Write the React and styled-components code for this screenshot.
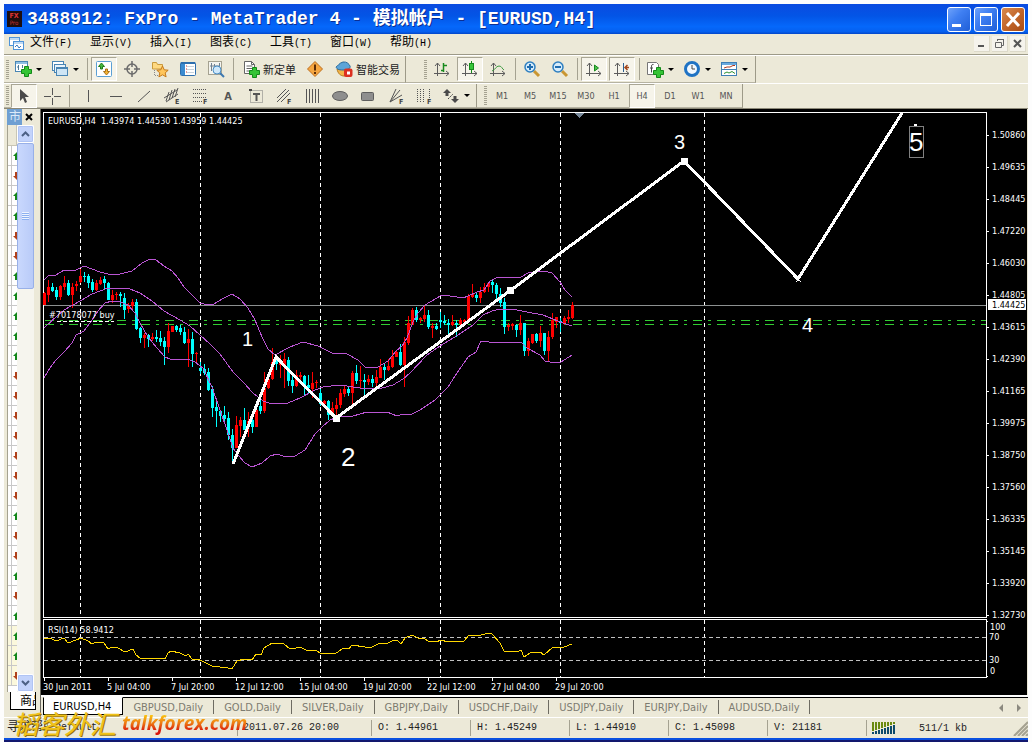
import styled, { createGlobalStyle, css } from "styled-components";

const UI_FONT = `"DejaVu Sans Condensed", "DejaVu Sans", "Noto Sans CJK SC", sans-serif`;
const SONG_FONT = `"Liberation Mono", "Noto Sans CJK SC", monospace`;

const GlobalStyle = createGlobalStyle`
  * {
    box-sizing: border-box;
  }

  body {
    margin: 0;
    background: #fdfdfd;
  }

  button {
    margin: 0;
    padding: 0;
    border: none;
    background: none;
    color: inherit;
    font: inherit;
  }

  ul {
    margin: 0;
    padding: 0;
    list-style: none;
  }
`;

const Page = styled.div`
  padding: 4px 4px 0;
  overflow: hidden;
`;

const Window = styled.div`
  position: relative;
  display: flex;
  flex-direction: column;
  background: #ece9d8;
  font-family: ${UI_FONT};
`;

/* ---------- title bar ---------- */

const TitleBar = styled.header`
  display: flex;
  align-items: center;
  height: 30px;
  padding: 0 3px;
  background: linear-gradient(#0a4be0, #0355e6 40%, #0568fb 75%, #0560f0 92%, #0346c8);
`;

const Title = styled.h1`
  flex: 1;
  margin: 0 0 0 5px;
  color: #fff;
  font-family: ${SONG_FONT};
  font-size: 18px;
  font-weight: bold;
  line-height: 24px;
  white-space: pre;
  text-shadow: 1px 1px 0 #0a2f94;
`;

const CaptionButtons = styled.div`
  display: flex;
  gap: 3px;
`;

const CaptionButton = styled.button`
  width: 24px;
  height: 25px;
  border: 1px solid #fff;
  border-radius: 3px;
  background: ${(p) =>
    p.$close
      ? "linear-gradient(135deg, #d98a4e, #c2662a 50%, #a84c14)"
      : "linear-gradient(135deg, #6ea2fb, #3f7ff2 40%, #1f5fd8)"};

  svg {
    display: block;
  }
`;

/* ---------- menu ---------- */

const MenuBar = styled.nav`
  display: flex;
  align-items: center;
  height: 21px;
  padding: 0 2px 1px 5px;
  border-bottom: 1px solid #9d9a88;
`;

const MenuItem = styled.button`
  width: 60px;
  color: #000;
  font-family: ${SONG_FONT};
  font-size: 12px;
  line-height: 18px;
  text-align: left;
  white-space: nowrap;

  &:first-of-type {
    margin-left: 6px;
  }
`;

const HotKey = styled.span`
  font-size: 10px;
`;

const Spacer = styled.div`
  flex: 1;
`;

const ChildButton = styled.button`
  width: 16px;
  height: 16px;
  margin-left: 2px;
  background: #f5f3ec;
  border-right: 1px solid #dcd9c9;
  border-bottom: 1px solid #dcd9c9;

  svg {
    display: block;
  }
`;

/* ---------- toolbars ---------- */

const ToolRow = styled.div`
  display: flex;
  height: ${(p) => p.$height}px;
  border-top: 1px solid #fff;
`;

const ToolBar = styled.div`
  display: flex;
  align-items: center;
  padding-right: 2px;
  border-right: 1px solid #9d9a88;
  border-bottom: 1px solid #b6b3a2;
`;

const Grip = styled.div`
  width: 3px;
  height: 19px;
  margin: 0 1px 0 ${(p) => p.$left || 2}px;
  background: repeating-linear-gradient(#a5a291 0 1px, #ece9d8 1px 2px);
`;

const Divider = styled.div`
  width: 1px;
  height: 22px;
  margin: 0 ${(p) => p.$right || 2}px 0 3px;
  background: #a5a291;
`;

const Tool = styled.button`
  display: flex;
  align-items: center;
  justify-content: center;
  width: ${(p) => p.$width || 28}px;
  height: 24px;
  flex: none;
  color: #555;
  font-size: 9px;

  ${(p) =>
    p.$pressed &&
    css`
      width: 26px;
      margin: 0 1px;
      background: #f6f4ea;
      border: 1px solid #a9a695;
      border-right-color: #fff;
      border-bottom-color: #fff;
    `}
`;

const TextTool = styled(Tool)`
  justify-content: flex-start;
  gap: 3px;
  padding-left: 6px;
  color: #222;
  font-family: "Noto Sans CJK SC", sans-serif;
  font-size: 11px;
  white-space: nowrap;
`;

const DropTool = styled(Tool)`
  justify-content: flex-start;
  gap: 4px;
  padding-left: 4px;

  &::after {
    content: "";
    border: 3px solid transparent;
    border-top-color: #000;
    border-bottom-width: 0;
  }
`;

/* ---------- work area ---------- */

const Main = styled.main`
  display: flex;
  border-top: 1px solid #8c8978;
`;

const MarketWatch = styled.aside`
  display: flex;
  flex-direction: column;
  flex: none;
  width: 36px;
  padding: 0 6px 0 3px;
`;

const WatchTitle = styled.div`
  display: flex;
  align-items: center;
  justify-content: space-between;
  height: 16px;
  color: #dce9f8;
  font-size: 12px;
  line-height: 16px;

  span {
    width: 15px;
    overflow: hidden;
    padding-left: 2px;
    background: #6f9fd2;
  }

  button {
    width: 9px;
    color: #000;
  }

  svg {
    display: block;
  }
`;

const WatchBody = styled.div`
  display: flex;
  flex: 1;
`;

const WatchList = styled.ul`
  flex: 1;
  overflow: hidden;
  border-left: 1px solid #a5a291;
  background: #fff;
`;

const WatchHead = styled.div`
  height: 21px;
  border-bottom: 1px solid #c9c6b5;
  border-right: 1px solid #c9c6b5;
  background: #ece9d8;
`;

const WatchRow = styled.li`
  display: flex;
  justify-content: flex-end;
  align-items: center;
  height: 20px;
  border-bottom: 1px solid #c8c8c8;
  background: linear-gradient(90deg, transparent 3px, #c8c8c8 3px 4px, transparent 4px)
    ${(p) => (p.$tint ? "#fbf8dc" : "#fff")};
`;

const ScrollBar = styled.div`
  display: flex;
  flex-direction: column;
  flex: none;
  width: 17px;
  background: #f6f5ee;
`;

const ScrollButton = styled.button`
  height: 18px;
  border: 1px solid #fff;
  border-radius: 2px;
  background: #c3d3fb;
  box-shadow: inset 0 0 0 1px #b0c4f4;

  svg {
    display: block;
    margin: auto;
  }
`;

const ScrollThumb = styled.div`
  display: flex;
  align-items: center;
  justify-content: center;
  height: 146px;
  border: 1px solid #98b0e8;
  border-radius: 2px;
  background: linear-gradient(90deg, #c9d8fd, #b9cbf8);

  &::before {
    content: "";
    width: 7px;
    height: 8px;
    background: repeating-linear-gradient(#eef4fe 0 1px, #8cb0f0 1px 2px);
  }
`;

const WatchTab = styled.button`
  width: 26px;
  height: 18px;
  margin: 0 0 7px 3px;
  overflow: hidden;
  border: 1px solid #000;
  border-top: none;
  background: #fff;
  padding-left: 9px;
  color: #000;
  font-size: 12px;
  line-height: 16px;
  text-align: left;
  white-space: nowrap;
`;

const ChartColumn = styled.section`
  flex: 1;
  min-width: 0;
  border-left: 1px solid #6b6960;
`;

const ChartSvg = styled.svg`
  display: block;
  width: 100%;
  height: auto;
  border-right: 1px solid #ece9d8;
  background: #000;
  font-family: ${UI_FONT};
  font-size: 9px;
`;

const TabBar = styled.div`
  display: flex;
  height: 22px;
  border-top: 2px solid #fff;
  padding-left: 2px;
`;

const TabList = styled.div`
  display: flex;
  flex: 1;
  border-top: 1px solid #000;
`;

const Tab = styled.button`
  align-self: flex-start;
  height: 17px;
  padding: 0 10px;
  color: #7d7b70;
  font-size: 11px;
  line-height: 17px;
  white-space: nowrap;

  & + & {
    border-right: 1px solid #6e6c62;
    height: 14px;
    margin-top: 2px;
    line-height: 13px;
  }

  ${(p) =>
    p.$active &&
    css`
      height: 18px;
      padding: 0 11px 0 9px;
      margin-top: -1px;
      border: 1px solid #000;
      border-top-color: #fff;
      background: #fff;
      color: #000;
    `}
`;

const TabArrows = styled.div`
  display: flex;
  gap: 7px;
  padding-right: 4px;

  svg {
    display: block;
  }
`;

/* ---------- status bar ---------- */

const StatusBar = styled.footer`
  display: flex;
  align-items: center;
  height: 21px;
  border-top: 1px solid #fff;
  color: #222;
  font-family: ${SONG_FONT};
  font-size: 10px;
`;

const StatusCell = styled.div`
  flex: none;
  width: ${(p) => p.$width}px;
  height: 16px;
  overflow: hidden;
  padding-left: ${(p) => p.$pad || 6}px;
  border-right: 1px solid #a5a291;
  line-height: 16px;
  white-space: pre;
`;

const HelpCell = styled(StatusCell)`
  font-size: 12px;
`;

const Connection = styled.div`
  display: flex;
  align-items: center;
  flex: 1;
  gap: 23px;
  padding-left: 5px;
  white-space: pre;
`;

const TaskBar = styled.div`
  height: 4px;
  border-top: 2px solid #0a50e0;
  background: #12186e;
`;

const Watermark = styled.div`
  position: absolute;
  left: 8px;
  bottom: 2px;
  display: flex;
  align-items: center;
  gap: 6px;
  font-style: italic;
  font-weight: bold;
  line-height: 26px;
  pointer-events: none;
`;

const WatermarkName = styled.span`
  color: #f0c21a;
  font-family: "Noto Sans CJK SC", sans-serif;
  font-size: 26px;
  font-weight: normal;
  text-shadow: 1px 1px 0 #9a7608;
`;

const WatermarkSite = styled.span`
  background: linear-gradient(#f9c412 20%, #ee7a12 50%, #d8180c 80%);
  background-clip: text;
  color: transparent;
  font-family: "Open Sans", sans-serif;
  font-size: 19px;
`;

/* ---------- icons ---------- */

const Icon = ({ children, w = 18, h = 18 }) => (
  <svg width={w} height={h} viewBox={`0 0 ${w} ${h}`} fill="none" aria-hidden="true">
    {children}
  </svg>
);

const Plus = ({ x, y }) => (
  <path d={`M${x + 3} ${y}h4v3h3v4h-3v3h-4v-3h-3v-4h3z`} fill="#35c435" stroke="#128a18" />
);

const Axes = () => (
  <path d="M4.5 16V3M2 6l2.500-3L7 6M1 13.500h15M13 11l3 2.500-3 2.500" stroke="#5c5c5c" />
);

const NewChartIcon = () => (
  <Icon>
    <rect x="1.500" y="1.500" width="12" height="10" fill="#fff" stroke="#4a86b4" />
    <path d="M2 3h11" stroke="#8fc0e4" strokeWidth="2" />
    <path d="M4.500 5v5M3 7h2M8.500 5v3" stroke="#4c7a99" />
    <Plus x={7.5} y={6.5} />
  </Icon>
);

const WindowsIcon = () => (
  <Icon>
    <rect x="1.500" y="1.500" width="11" height="9" fill="#fff" stroke="#4a86b4" />
    <rect x="3.500" y="4.500" width="11" height="8" fill="#eaf4fb" stroke="#4a86b4" />
    <rect x="5.500" y="7.500" width="11" height="8" fill="#cfe6f5" stroke="#4a86b4" />
    <path d="M6 8.500h10" stroke="#4a86b4" />
  </Icon>
);

const MarketIcon = () => (
  <Icon>
    <rect x="1.500" y="1.500" width="15" height="15" rx="1" fill="#fff" stroke="#5b9fd4" />
    <path d="M6.500 3l3 3.500h-2V9h-2V6.500h-2z" fill="#46b83c" stroke="#1f7d1a" />
    <path d="M11.500 15l3-3.500h-2V9h-2v2.500h-2z" fill="#f3b330" stroke="#a9711a" />
  </Icon>
);

const TargetIcon = () => (
  <Icon>
    <circle cx="9" cy="9" r="5" stroke="#6b6b6b" strokeWidth="1.500" />
    <path d="M9 1v6M9 11v6M1 9h6M11 9h6" stroke="#6b6b6b" strokeWidth="1.500" />
  </Icon>
);

const FolderStarIcon = () => (
  <Icon>
    <path d="M1.500 9V2.500h4l1 2h5V9z" fill="#ffd980" stroke="#c99a3c" />
    <path d="M3.500 10v6M4 15.500h4" stroke="#8a8a8a" strokeDasharray="1 1" />
    <path
      d="M11.500 6l1.700 3.800 4 .4-3 2.700.9 4-3.600-2.100-3.600 2.100.9-4-3-2.700 4-.4z"
      fill="#ffc65c"
      stroke="#c47a1c"
    />
  </Icon>
);

const TerminalIcon = () => (
  <Icon>
    <rect x="1.500" y="2.500" width="15" height="13" rx="1" fill="#fff" stroke="#2e6fae" />
    <rect x="2" y="3" width="4" height="12" fill="#3b8bd0" />
    <path d="M2 3h14" stroke="#2e6fae" strokeWidth="2" />
    <path d="M8 6.500h7M8 9.500h7M8 12.500h7" stroke="#c6d2dc" />
    <path d="M7 6h1M7 9h1M7 12h1" stroke="#c33" />
  </Icon>
);

const TesterIcon = () => (
  <Icon>
    <rect x="1.500" y="1.500" width="13" height="13" fill="#f4f4ee" stroke="#a5a291" />
    <path d="M4.500 3v8M7.500 4v4M12.500 3v4M3 6h10" stroke="#708090" />
    <circle cx="10" cy="10" r="4" fill="#cfe8fa" stroke="#4a8fc6" />
    <path d="M13 13l4 4" stroke="#3d78b0" strokeWidth="2" />
  </Icon>
);

const NewOrderIcon = () => (
  <Icon>
    <path d="M2.500 1.500h7l3 3v9h-10z" fill="#fff" stroke="#666" />
    <path d="M9.500 1.500v3h3M4.500 6h6M4.500 8.500h6M4.500 11h4" stroke="#666" />
    <Plus x={7.5} y={7.5} />
  </Icon>
);

const WarningIcon = () => (
  <Icon>
    <path d="M9 1.500L16.500 9 9 16.500 1.500 9z" fill="#f5a640" stroke="#bd6f1e" />
    <path d="M9 4.500v6M9 12v2" stroke="#5b2c06" strokeWidth="2" />
  </Icon>
);

const RobotIcon = () => (
  <Icon>
    <path d="M2 9c1 5 4 7 7 7s6-3 6-7z" fill="#f3b548" stroke="#b57a1e" />
    <path d="M1 7c2-1 3-4 7-5 4-.5 6 2 7 4 1 2-2 4-7 4S2 9 1 7z" fill="#5ba4d8" stroke="#2c6c9e" />
    <rect x="9" y="8.500" width="8.500" height="8.500" rx="2" fill="#dc3020" />
    <rect x="12" y="11.500" width="3" height="3" fill="#fff" />
  </Icon>
);

const BarsIcon = () => (
  <Icon>
    <Axes />
    <path d="M10.500 3v9M8 10.500h2M11 5.500h3" stroke="#178a1c" strokeWidth="1.500" />
  </Icon>
);

const CandleIcon = () => (
  <Icon>
    <Axes />
    <path d="M10.500 1v12" stroke="#178a1c" />
    <rect x="8.500" y="3.500" width="4" height="6" fill="#37c63a" stroke="#178a1c" />
  </Icon>
);

const LineIcon = () => (
  <Icon>
    <Axes />
    <path d="M3 11c3-1 4-5 7-5s3 3 5 4" stroke="#3b9a3e" />
  </Icon>
);

const ZoomIcon = ({ plus }) => (
  <Icon>
    <path d="M11 11l5 5" stroke="#c99632" strokeWidth="3" />
    <circle cx="7" cy="7" r="5" fill="#d6ecfb" stroke="#2e7fc0" strokeWidth="1.500" />
    <path d={plus ? "M4 7h6M7 4v6" : "M4 7h6"} stroke="#1f6db0" strokeWidth="2" />
  </Icon>
);

const AutoScrollIcon = () => (
  <Icon>
    <Axes />
    <path d="M9.500 5v6l4-3z" fill="#4cc04c" stroke="#178a1c" />
  </Icon>
);

const ShiftIcon = () => (
  <Icon>
    <Axes />
    <path d="M10.500 3v9" stroke="#2c5f91" />
    <path d="M12 7.500h4M14.500 5L12 7.500l2.500 2.500" stroke="#a3481c" strokeWidth="1.500" />
  </Icon>
);

const IndicatorIcon = () => (
  <Icon>
    <path d="M1.500 2.500h9l2 2v10h-11z" fill="#fff" stroke="#777" />
    <path d="M7.500 4.500c-2-.5-2 1-2 3v5M4 8h3" stroke="#444" />
    <Plus x={7.5} y={7.5} />
  </Icon>
);

const ClockIcon = () => (
  <Icon>
    <circle cx="9" cy="9" r="6.500" fill="#f2f9ff" stroke="#1f73c4" strokeWidth="3" />
    <path d="M9 5v4h3" stroke="#444" />
  </Icon>
);

const TemplateIcon = () => (
  <Icon>
    <rect x="1.500" y="2.500" width="15" height="13" fill="#fff" stroke="#3f7fb5" />
    <path d="M2 4h14" stroke="#6aaade" strokeWidth="2" />
    <path d="M2 9.500h14" stroke="#3f7fb5" />
    <path d="M4 8l3-1h3l3-1.500h2" stroke="#b0391e" />
    <path d="M4 13.500l3-1.500 2 1 3-1.500 3 2" stroke="#2d9132" />
  </Icon>
);

const CursorIcon = () => (
  <Icon>
    <path d="M5 2v12l3-3 2 5 2-1-2-5h4z" fill="#4a4a4a" />
  </Icon>
);

const DrawIcon = ({ d, letter, dash }) => (
  <Icon>
    <path d={d} stroke="#555" strokeDasharray={dash} />
    {letter && (
      <text x="12" y="17" fill="#444" fontSize="7" fontWeight="bold">
        {letter}
      </text>
    )}
  </Icon>
);

const TextIcon = () => (
  <Icon>
    <text x="9" y="13" textAnchor="middle" fill="#555" fontSize="11" fontWeight="bold">
      A
    </text>
  </Icon>
);

const LabelIcon = () => (
  <Icon>
    <rect x="3.500" y="3.500" width="12" height="12" stroke="#777" strokeDasharray="1 1" />
    <path d="M2 3h3" stroke="#444" strokeWidth="2" />
    <path d="M6 7h7M9.500 6v8" stroke="#555" strokeWidth="2" />
  </Icon>
);

const EllipseIcon = () => (
  <Icon>
    <ellipse cx="9" cy="9" rx="7.500" ry="4.500" fill="#8e8e8e" stroke="#5e5e5e" />
  </Icon>
);

const RectIcon = () => (
  <Icon>
    <rect x="2.500" y="5.500" width="12" height="8" rx="1" fill="#8e8e8e" stroke="#5e5e5e" />
  </Icon>
);

const ArrowsIcon = () => (
  <Icon>
    <path d="M5 2l4 4H6.500v3h-3V6H1zM13 16l-4-4h2.500V9h3v3H17z" fill="#4a4a4a" />
    <path d="M6 12l5-5" stroke="#4a4a4a" strokeDasharray="2 1" />
  </Icon>
);

/* ---------- chart data ---------- */

const prices = [
  "1.50860", "1.49635", "1.48445", "1.47220", "1.46030", "1.44805", "1.43615", "1.42390",
  "1.41165", "1.39975", "1.38750", "1.37560", "1.36335", "1.35145", "1.33920", "1.32730",
];

const dates = [
  "30 Jun 2011", "5 Jul 04:00", "7 Jul 20:00", "12 Jul 12:00", "15 Jul 04:00",
  "19 Jul 20:00", "22 Jul 12:00", "27 Jul 04:00", "29 Jul 20:00",
];

const daySeparators = [80, 200, 320, 440, 560, 704];

// direction, high, body top, body bottom, low
const candles = `
u 292 293 305 305|u 280 287 295 302|d 283 287 291 292|d 287 290 297 300|u 285 286 297 300
u 276 283 287 290|d 280 283 295 296|u 283 287 295 308|u 281 284 286 291|u 269 276 282 283
d 272 276 277 282|d 274 276 283 288|d 279 282 290 292|u 280 283 290 291|u 277 280 284 285
d 276 279 283 289|d 282 283 300 300|u 290 295 300 303|u 292 294 295 300|d 292 294 296 307
d 293 298 310 319|u 303 306 309 313|u 299 302 306 310|d 299 302 329 330|d 327 328 338 343
u 333 335 338 348|d 334 335 339 347|u 333 337 339 341|d 330 337 339 342|d 331 338 342 346
d 337 341 347 365|u 323 331 347 353|u 326 326 332 332|d 325 326 330 332|d 325 328 332 335
d 327 332 343 344|u 329 339 343 367|d 332 339 354 367|u 352 353 354 362|d 362 368 371 374
d 364 369 373 375|d 368 372 390 391|d 386 389 408 417|d 402 407 411 427|d 410 411 416 422
d 406 415 419 422|d 412 418 435 440|d 429 435 448 463|u 416 425 448 448|u 417 420 426 437
d 408 420 430 430|u 412 421 427 437|d 418 420 427 433|u 408 410 427 427|d 395 406 411 414
u 372 388 411 413|u 372 379 388 389|u 348 362 379 380|d 357 359 364 370|u 355 363 365 378
u 353 359 365 388|d 357 360 381 386|d 375 380 386 393|u 370 375 386 387|u 372 375 377 380
d 375 376 387 396|d 375 385 388 394|u 372 383 389 398|u 380 382 383 388|d 389 393 404 406
u 400 401 404 407|d 400 401 415 420|u 402 408 415 417|u 398 405 409 417|u 389 393 405 408
u 386 389 394 397|d 387 389 393 396|u 371 373 393 405|d 365 373 381 384|u 366 380 381 389
d 374 380 382 395|u 375 379 382 385|d 375 379 383 387|u 370 377 383 388|u 359 367 378 378
d 363 367 370 380|u 359 366 370 371|u 350 356 367 368|u 350 352 357 357|d 344 352 365 366
u 337 342 365 387|u 316 323 343 345|u 308 310 325 325|d 307 310 320 322|u 317 318 320 323
u 306 315 319 322|d 310 315 327 329|u 323 326 328 338|d 323 326 329 330|d 312 320 322 328
d 315 321 323 325|d 319 323 325 335|u 315 322 325 326|d 320 323 325 337|u 318 320 324 327
u 319 320 322 324|u 294 296 322 322|u 284 294 297 298|d 292 295 298 302|u 287 292 298 303
u 283 287 292 293|u 282 283 287 292|d 280 282 285 293|d 283 285 294 300|d 288 294 303 307
d 298 302 327 334|u 323 325 327 331|u 323 324 326 330|d 324 325 330 337|u 315 323 330 335
d 323 323 351 356|u 338 341 351 356|u 334 334 343 344|d 333 334 341 343|u 326 333 341 347
d 333 333 351 355|u 331 337 351 362|u 313 320 337 339|u 317 317 322 328|d 318 321 323 332
u 316 318 323 325|u 310 317 319 323|u 302 305 318 319`
  .trim()
  .split(/[|\n]/)
  .map((row) => {
    const [dir, ...v] = row.split(" ");
    const [high, top, bottom, low] = v.map(Number);
    return { color: dir === "u" ? "#f00" : "#0ff", high, top, bottom, low };
  });

const bands = [
  "44,280 48,276 56,275 64,270 76,270 84,266 92,269 100,272 108,274 120,274 132,271 142,263 150,259 156,260 164,266 172,271 178,278 184,287 192,295 200,303 208,305 214,304 222,299 232,294 240,299 248,308 255,320 262,337 268,349 275,355 290,347 303,342 318,346 332,353 347,354 358,360 365,367 378,367 388,361 396,351 402,346 407,338 413,322 418,313 425,305 430,302 442,295 450,296 463,298 468,296 477,292 484,290 490,281 498,277 521,277 528,273 544,271 552,273 560,282 565,290 572,297",
  "44,328 58,315 64,310 80,301 92,294 108,288 130,289 140,293 152,301 164,311 180,320 190,326 200,335 210,344 220,354 233,372 243,382 253,393 263,401 272,404 288,403 300,398 315,390 323,387 340,385 353,387 367,389 382,388 393,385 403,379 410,373 427,355 440,346 458,335 473,325 483,315 492,311 500,309 517,310 527,312 543,315 553,319 563,323 572,326",
  "44,378 50,368 56,360 64,352 72,343 76,335 84,331 92,320 98,311 105,303 112,301 120,302 128,305 135,313 140,323 148,337 157,348 165,357 170,359 187,359 195,362 203,368 212,387 220,410 227,430 233,448 238,455 245,463 252,467 262,463 270,456 277,454 283,456 295,456 305,450 315,434 322,427 330,420 340,416 353,416 367,412 387,412 397,416 403,414 412,414 420,410 435,400 448,387 457,373 468,357 476,352 481,341 486,341 492,343 500,342 505,343 521,342 527,348 540,355 545,361 550,362 561,362 572,355",
];

const rsi =
  "44,638 50,638 56,641 64,638 68,643 76,640 81,638 88,641 92,644 96,642 104,643 108,649 112,647 118,648 125,652 133,649 136,655 140,658 165,659 168,653 171,651 180,653 186,656 188,654 192,659 200,660 206,663 212,666 228,668 232,669 237,661 244,659 252,660 256,654 261,655 264,648 272,643 284,644 290,649 296,648 300,647 308,651 316,650 320,653 334,654 338,652 343,648 349,649 352,645 365,647 372,647 380,643 388,643 394,640 398,641 401,644 405,638 412,635 418,638 424,638 428,641 436,642 441,640 448,642 464,641 469,635 478,636 488,633 492,634 500,643 504,651 517,652 521,650 524,657 530,653 540,652 544,655 553,647 564,647 572,644";

const waves = "233,464 276,357 336,418 511,290 684,161 798,279 902,113";

const Chart = () => (
  <ChartSvg viewBox="41 109 986 586" role="img" aria-label="EURUSD,H4">
    <g shapeRendering="crispEdges" fill="none">
      <path d="M43.500 617.500V112.500H986.500V617.500z" stroke="#fff" />
      <path d="M43.500 677.500V619.500H986.500V677.500z" stroke="#fff" />

      {daySeparators.map((x) => (
        <path
          key={x}
          d={`M${x}.500 113V617M${x}.500 620V677`}
          stroke="#fff"
          strokeDasharray="4 3"
        />
      ))}
      <path d="M44 637.500H986M44 660.500H986" stroke="#c0c0c0" strokeDasharray="4 3" />

      <path d="M44 305.500H986" stroke="#8c9090" />
      <path d="M45 320.500H986M45 324.500H986" stroke="#32cd32" strokeDasharray="9 6 3 6" />

      {candles.map((c, i) => (
        <g key={i} fill={c.color}>
          <rect x={44 + i * 4} y={c.high} width="1" height={c.low - c.high} />
          <rect x={43 + i * 4} y={c.top} width="3" height={Math.max(c.bottom - c.top, 1)} />
        </g>
      ))}

      {bands.map((points) => (
        <polyline key={points} points={points} stroke="#ba55d3" />
      ))}
      <polyline points={rsi} stroke="#ffd700" />

      <polyline points={waves} stroke="#fff" strokeWidth="3" />
      <g fill="#fff">
        <rect x="333" y="415" width="7" height="7" />
        <rect x="507" y="287" width="7" height="7" />
        <rect x="681" y="158" width="7" height="7" />
        <rect x="914" y="124" width="3" height="2" />
      </g>
      <path d="M796 277l5 5M801 277l-5 5" stroke="#fff" />
      <path d="M57 321.500H114" stroke="#fff" strokeDasharray="4 2" />
      <rect x="909.500" y="126.500" width="14" height="31" stroke="#808080" />
      <path d="M574 113h10l-5 5z" fill="#778899" />

      {prices.map((p, i) => (
        <path key={p} d={`M987 ${135 + i * 32}.500h2`} stroke="#fff" />
      ))}
      {dates.map((d, i) => (
        <path key={d} d={`M${44 + i * 64}.500 678v3`} stroke="#fff" />
      ))}
      <path d="M987 621.500h1M987 676.500h1" stroke="#fff" />
      <rect x="988" y="299" width="38" height="11" fill="#fff" />
    </g>

    <g fill="#fff">
      <text x="48" y="124">
        EURUSD,H4&nbsp; 1.43974 1.44530 1.43959 1.44425
      </text>
      <text x="49" y="318">
        #70178077 buy
      </text>
      <text x="48" y="633">
        RSI(14) 58.9412
      </text>
      {prices.map((p, i) => (
        <text key={p} x="992" y={138 + i * 32}>
          {p}
        </text>
      ))}
      <text x="992" y="308" fill="#000">
        1.44425
      </text>
      <text x="990" y="630">
        100
      </text>
      <text x="989" y="640">
        70
      </text>
      <text x="989" y="663">
        30
      </text>
      <text x="990" y="674">
        0
      </text>
      {dates.map((d, i) => (
        <text key={d} x={43 + i * 64} y="690">
          {d}
        </text>
      ))}
    </g>

    <g fill="#fff" fontFamily="Liberation Sans, sans-serif" fontSize="20">
      <text x="242" y="346">1</text>
      <text x="341" y="466" fontSize="26">2</text>
      <text x="674" y="149">3</text>
      <text x="802" y="332">4</text>
      <text x="909" y="151" fontSize="26">5</text>
    </g>
  </ChartSvg>
);

/* ---------- page data ---------- */

const menus = [
  ["文件", "F"],
  ["显示", "V"],
  ["插入", "I"],
  ["图表", "C"],
  ["工具", "T"],
  ["窗口", "W"],
  ["帮助", "H"],
];

const drawTools = [
  { name: "Vertical line", icon: <DrawIcon d="M9.500 3v12" /> },
  { name: "Horizontal line", icon: <DrawIcon d="M3 9.500h12" /> },
  { name: "Trendline", icon: <DrawIcon d="M3 15L15 4" /> },
  {
    name: "Equidistant channel",
    icon: <DrawIcon d="M1 11L14 3M3 15L15 7M3 14L6 5M6 13L9 3M9 11l3-9M12 10l3-9" letter="E" />,
  },
  {
    name: "Fibonacci retracement",
    icon: <DrawIcon d="M2 2.500h14M2 6.500h14M2 10.500h14M2 14.500h9" dash="1 1" letter="F" />,
  },
  { name: "Text", icon: <TextIcon /> },
  { name: "Text label", icon: <LabelIcon /> },
  {
    name: "Fibonacci channel",
    icon: <DrawIcon d="M2 11L11 2M2 15L14 3M6 15L15 6" letter="F" />,
  },
  {
    name: "Cycle lines",
    icon: <DrawIcon d="M3.500 2v14M6.500 2v14M9.500 2v14M12.500 2v14M15.500 2v14" />,
  },
  { name: "Ellipse", icon: <EllipseIcon /> },
  { name: "Rectangle", icon: <RectIcon /> },
  {
    name: "Fibonacci fan",
    icon: <DrawIcon d="M3 15L9 2M3 15L13 3M3 15L15 8" letter="F" />,
  },
  {
    name: "Time zones",
    icon: <DrawIcon d="M2.500 2v14M5.500 2v14M8.500 2v14M14.500 2v9" dash="1 1" letter="F" />,
  },
];

const periods = ["M1", "M5", "M15", "M30", "H1", "H4", "D1", "W1", "MN"];

const chartTabs = [
  "EURUSD,H4",
  "GBPUSD,Daily",
  "GOLD,Daily",
  "SILVER,Daily",
  "GBPJPY,Daily",
  "USDCHF,Daily",
  "USDJPY,Daily",
  "EURJPY,Daily",
  "AUDUSD,Daily",
];

const quotes = ["O: 1.44961", "H: 1.45249", "L: 1.44910", "C: 1.45098", "V: 21181"];

// one letter per symbol row: up or down
const watchMoves = "uduudduuuuudddddddudduduuud".split("");

const App = () => {
  return (
    <Page>
      <GlobalStyle />
      <Window>
        <TitleBar>
          <Icon w={15} h={16}>
            <rect width="15" height="16" fill="#1d0d0d" />
            <text x="7" y="7" textAnchor="middle" fill="#d33" fontSize="7" fontWeight="bold">
              FX
            </text>
            <text x="7" y="14" textAnchor="middle" fill="#c33" fontSize="6">
              Pro
            </text>
          </Icon>
          <Title>3488912: FxPro - MetaTrader 4 - 模拟帐户 - [EURUSD,H4]</Title>
          <CaptionButtons>
            <CaptionButton aria-label="Minimize">
              <Icon w={22} h={23}>
                <rect x="4" y="16" width="9" height="3" fill="#fff" />
              </Icon>
            </CaptionButton>
            <CaptionButton aria-label="Maximize">
              <Icon w={22} h={23}>
                <rect x="5.500" y="6.500" width="11" height="11" stroke="#fff" />
                <path d="M5 6.500h12" stroke="#fff" strokeWidth="3" />
              </Icon>
            </CaptionButton>
            <CaptionButton $close aria-label="Close">
              <Icon w={22} h={23}>
                <path d="M5 5l12 13M17 5L5 18" stroke="#fff" strokeWidth="3" />
              </Icon>
            </CaptionButton>
          </CaptionButtons>
        </TitleBar>

        <MenuBar>
          <Icon w={15} h={15}>
            <rect x="0.500" y="1.500" width="10" height="8" fill="#fff" stroke="#4f94d8" />
            <rect x="4.500" y="5.500" width="10" height="8" fill="#fff" stroke="#4f94d8" />
            <path d="M1 3h9M5 7h9" stroke="#7fb4e6" />
            <path d="M6 11l2-2 2 3 2-2" stroke="#3a7abf" />
          </Icon>
          {menus.map(([label, key]) => (
            <MenuItem key={key}>
              {label}
              <HotKey>({key})</HotKey>
            </MenuItem>
          ))}
          <Spacer />
          <ChildButton aria-label="Minimize chart">
            <Icon w={15} h={15}>
              <path d="M4 10h6" stroke="#555" strokeWidth="2" />
            </Icon>
          </ChildButton>
          <ChildButton aria-label="Restore chart">
            <Icon w={15} h={15}>
              <path d="M5.500 5V3.500h6v6H10M5 3.500h7M3.500 6.500h6v5h-6z" stroke="#666" />
            </Icon>
          </ChildButton>
          <ChildButton aria-label="Close chart">
            <Icon w={15} h={15}>
              <path d="M4 4l7 7M11 4l-7 7" stroke="#555" strokeWidth="2" />
            </Icon>
          </ChildButton>
        </MenuBar>

        <ToolRow $height={28}>
          <ToolBar>
            <Grip />
            <DropTool $width={37} aria-label="New chart"><NewChartIcon /></DropTool>
            <DropTool $width={37} aria-label="Profiles"><WindowsIcon /></DropTool>
            <Divider />
            <Tool $pressed aria-label="Market watch"><MarketIcon /></Tool>
            <Tool aria-label="Data window"><TargetIcon /></Tool>
            <Tool aria-label="Navigator"><FolderStarIcon /></Tool>
            <Tool aria-label="Terminal"><TerminalIcon /></Tool>
            <Tool aria-label="Strategy tester"><TesterIcon /></Tool>
            <Divider />
            <TextTool $width={65}><NewOrderIcon />新定单</TextTool>
            <Tool aria-label="MetaEditor"><WarningIcon /></Tool>
            <TextTool $width={74}><RobotIcon />智能交易</TextTool>
          </ToolBar>
          <ToolBar>
            <Grip $left={18} />
            <Tool aria-label="Bar chart"><BarsIcon /></Tool>
            <Tool $pressed aria-label="Candlesticks"><CandleIcon /></Tool>
            <Tool aria-label="Line chart"><LineIcon /></Tool>
            <Divider />
            <Tool aria-label="Zoom in"><ZoomIcon plus /></Tool>
            <Tool aria-label="Zoom out"><ZoomIcon /></Tool>
            <Divider />
            <Tool $pressed aria-label="Auto scroll"><AutoScrollIcon /></Tool>
            <Tool $pressed aria-label="Chart shift"><ShiftIcon /></Tool>
            <Divider />
            <DropTool $width={37} aria-label="Indicators"><IndicatorIcon /></DropTool>
            <DropTool $width={37} aria-label="Periods"><ClockIcon /></DropTool>
            <DropTool $width={37} aria-label="Templates"><TemplateIcon /></DropTool>
          </ToolBar>
        </ToolRow>

        <ToolRow $height={25}>
          <ToolBar>
            <Grip />
            <Tool $pressed aria-label="Cursor"><CursorIcon /></Tool>
            <Tool aria-label="Crosshair">
              <DrawIcon d="M9.500 1v7M9.500 11v7M1 9.500h7M11 9.500h7" />
            </Tool>
            <Divider $right={4} />
            {drawTools.map((t) => (
              <Tool key={t.name} aria-label={t.name}>
                {t.icon}
              </Tool>
            ))}
            <DropTool $width={36} aria-label="Arrows"><ArrowsIcon /></DropTool>
          </ToolBar>
          <ToolBar>
            <Grip $left={7} />
            {periods.map((p) => (
              <Tool key={p} $pressed={p === "H4"}>
                {p}
              </Tool>
            ))}
          </ToolBar>
        </ToolRow>

        <Main>
          <MarketWatch>
            <WatchTitle>
              <span>市</span>
              <button aria-label="Close market watch">
                <Icon w={8} h={8}>
                  <path d="M1 1l6 6M7 1L1 7" stroke="#000" strokeWidth="2" />
                </Icon>
              </button>
            </WatchTitle>
            <WatchBody>
              <WatchList>
                <WatchHead />
                {watchMoves.map((m, i) => (
                  <WatchRow key={i} $tint={i > 23}>
                    <Icon w={4} h={10}>
                      <path
                        d={m === "u" ? "M4 1L0 5h2v4h2z" : "M4 9L0 5h2V1h2z"}
                        fill={m === "u" ? "#12861a" : "#b0401a"}
                      />
                    </Icon>
                  </WatchRow>
                ))}
              </WatchList>
              <ScrollBar>
                <ScrollButton aria-label="Scroll up">
                  <Icon w={9} h={8}>
                    <path d="M1 6l3.500-3.500L8 6" stroke="#4d6185" strokeWidth="2" />
                  </Icon>
                </ScrollButton>
                <ScrollThumb />
                <Spacer />
                <ScrollButton aria-label="Scroll down">
                  <Icon w={9} h={8}>
                    <path d="M1 2l3.500 3.500L8 2" stroke="#4d6185" strokeWidth="2" />
                  </Icon>
                </ScrollButton>
              </ScrollBar>
            </WatchBody>
            <WatchTab>商品</WatchTab>
          </MarketWatch>

          <ChartColumn>
            <Chart />
            <TabBar>
              <TabList>
                {chartTabs.map((t, i) => (
                  <Tab key={t} $active={i === 0}>
                    {t}
                  </Tab>
                ))}
                <Spacer />
                <TabArrows>
                  <button aria-label="Previous tabs">
                    <Icon w={10} h={8}>
                      <path d="M6 0v8L2 4z" fill="#8c8a80" />
                    </Icon>
                  </button>
                  <button aria-label="Next tabs">
                    <Icon w={10} h={8}>
                      <path d="M3 0v8l4-4z" fill="#8c8a80" />
                    </Icon>
                  </button>
                </TabArrows>
              </TabList>
            </TabBar>
          </ChartColumn>
        </Main>

        <StatusBar>
          <HelpCell $width={44} $pad={3}>寻求帮助</HelpCell>
          <StatusCell $width={190} $pad={7}>Default</StatusCell>
          <StatusCell $width={134} $pad={5}>2011.07.26 20:00</StatusCell>
          {quotes.map((q) => (
            <StatusCell key={q} $width={99}>
              {q}
            </StatusCell>
          ))}
          <Connection>
            <Icon w={24} h={12}>
              {[...Array(8)].map((_, i) => (
                <g key={i}>
                  <rect x={i * 3} y="0" width="2" height={9 - i} fill="#6b8a10" />
                  <rect x={i * 3} y={10 - i} width="2" height={2 + i} fill="#0d4a6b" />
                </g>
              ))}
            </Icon>
            511/1 kb
          </Connection>
          <Icon w={16} h={16}>
            <path d="M2 16L16 2M6 16L16 6M10 16l6-6M14 16l2-2" stroke="#a5a291" strokeWidth="2" />
          </Icon>
        </StatusBar>
        <Watermark>
          <WatermarkName>韬客外汇</WatermarkName>
          <WatermarkSite>talkforex.com</WatermarkSite>
        </Watermark>
      </Window>
      <TaskBar />
    </Page>
  );
};

export default App;
